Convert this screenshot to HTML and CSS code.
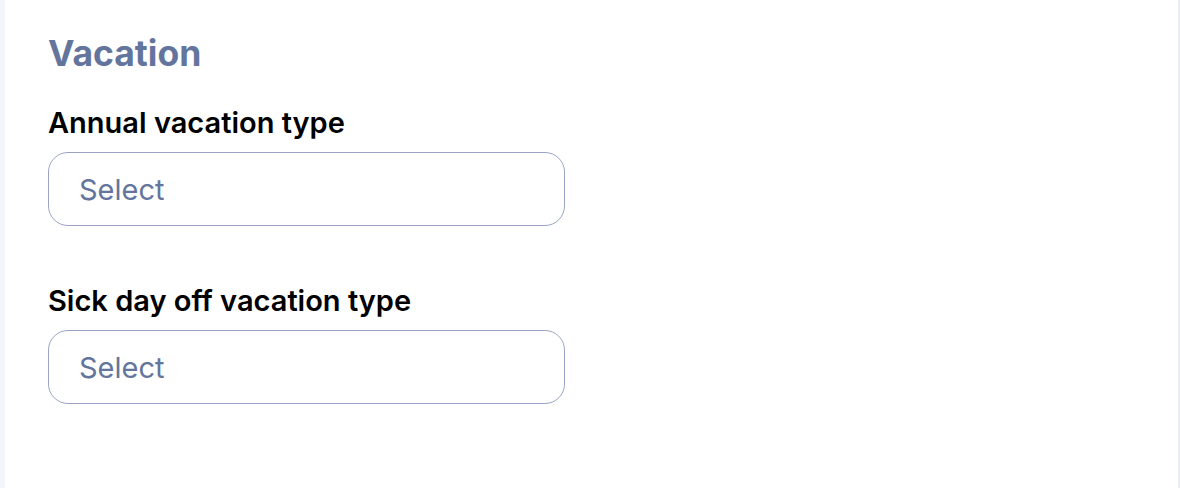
FILE: index.html
```html
<!DOCTYPE html>
<html lang="en">
<head>
<meta charset="utf-8">
<title>Vacation</title>
<link rel="stylesheet" href="styles.css">
</head>
<body>
<main class="card">
  <h2 class="section-title">Vacation</h2>
  <div class="field">
    <label class="field-label">Annual vacation type</label>
    <div class="select-box"><span class="placeholder">Select</span></div>
  </div>
  <div class="field">
    <label class="field-label">Sick day off vacation type</label>
    <div class="select-box"><span class="placeholder">Select</span></div>
  </div>
</main>
</body>
</html>
```

FILE: styles.css
```css
html, body {
  margin: 0;
  padding: 0;
  height: 100%;
}
body {
  background: #f4f5fa;
  font-family: Inter, "Noto Sans", sans-serif;
  display: flex;
  padding-left: 5px;
  box-sizing: border-box;
}
.card {
  flex: 1;
  background: #ffffff;
  border-right: 2px solid #eceef5;
  padding: 30px 0 0 43px;
  box-sizing: border-box;
}
.section-title {
  margin: 0;
  font-size: 35.5px;
  font-weight: 700;
  color: #63759d;
  line-height: 48px;
}
.field {
  display: flex;
  flex-direction: column;
  margin-top: 27px;
}
.field + .field {
  margin-top: 57px;
}
.field-label {
  font-size: 29px;
  font-weight: 600;
  color: #000;
  line-height: 36px;
  margin-bottom: 11px;
}
.select-box {
  width: 517px;
  height: 74px;
  box-sizing: border-box;
  border: 1px solid #9ba4c4;
  border-radius: 20px;
  display: flex;
  align-items: center;
  padding-left: 30px;
}
.placeholder {
  font-size: 29px;
  color: #63759d;
}
```
